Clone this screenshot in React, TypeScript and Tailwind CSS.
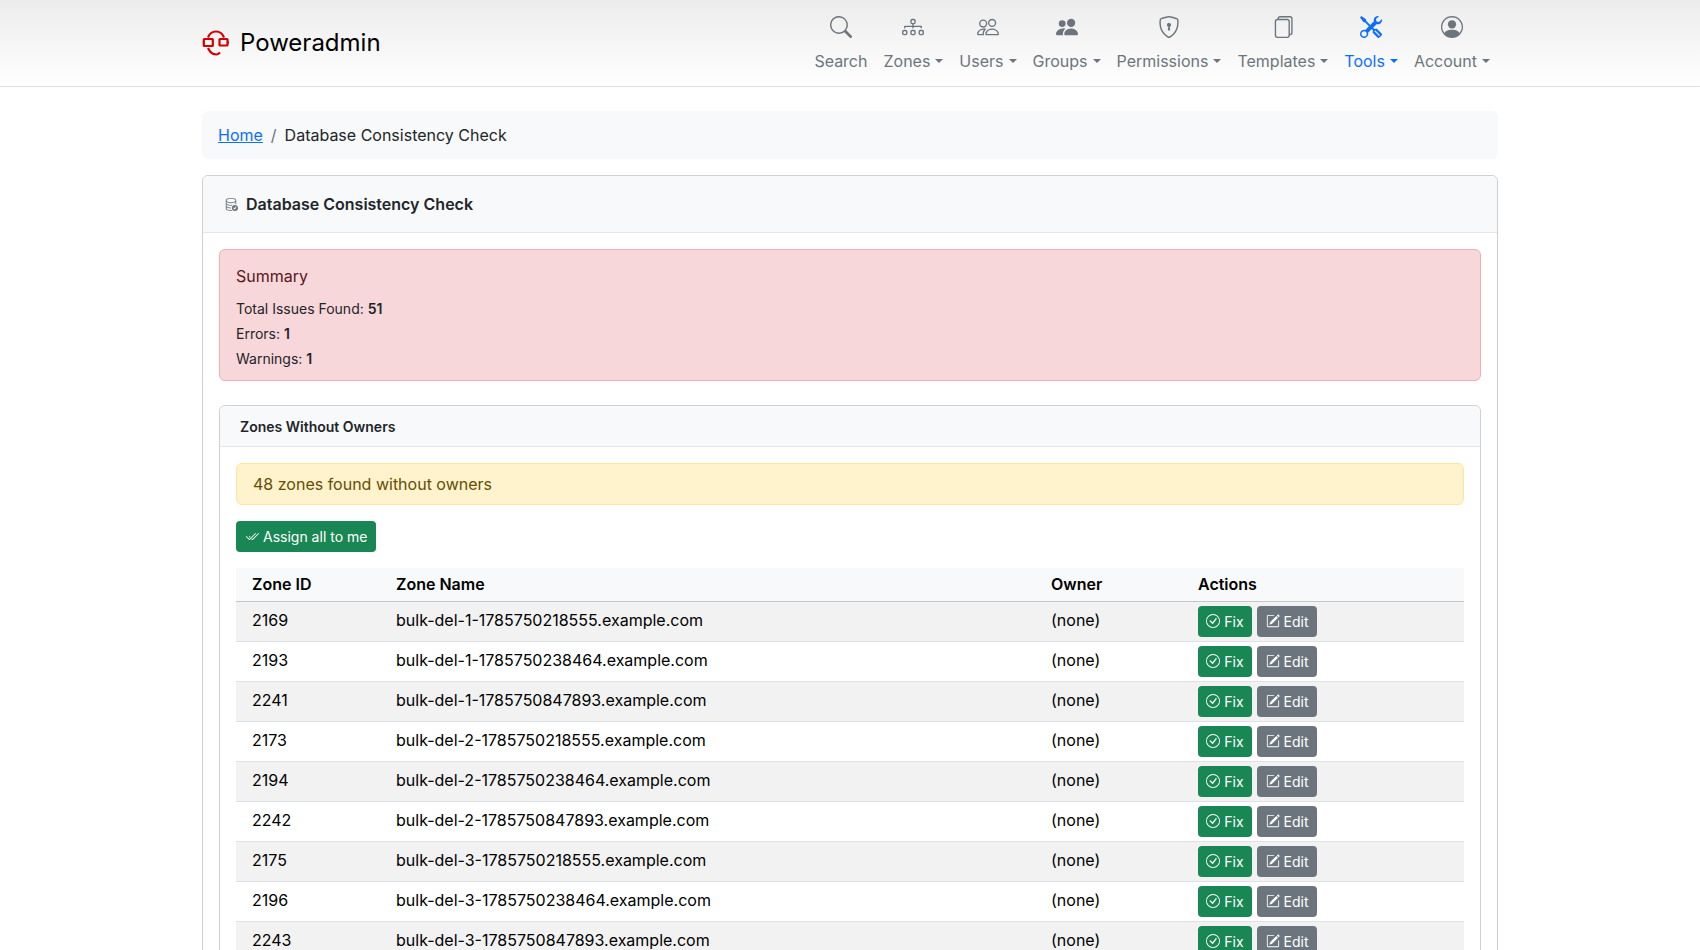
import { BsCheck2All, BsCheckCircle, BsDatabaseCheck, BsDiagram3, BsFiles, BsPencilSquare, BsPeople, BsPeopleFill, BsPersonCircle, BsSearch, BsShieldLock, BsTools } from "react-icons/bs";

const navItems = [
  { icon: BsSearch, label: "Search", caret: false },
  { icon: BsDiagram3, label: "Zones", caret: true },
  { icon: BsPeople, label: "Users", caret: true },
  { icon: BsPeopleFill, label: "Groups", caret: true },
  { icon: BsShieldLock, label: "Permissions", caret: true },
  { icon: BsFiles, label: "Templates", caret: true },
  { icon: BsTools, label: "Tools", caret: true, active: true },
  { icon: BsPersonCircle, label: "Account", caret: true },
];

const zones = [
  { id: 2169, name: "bulk-del-1-1785750218555.example.com" },
  { id: 2193, name: "bulk-del-1-1785750238464.example.com" },
  { id: 2241, name: "bulk-del-1-1785750847893.example.com" },
  { id: 2173, name: "bulk-del-2-1785750218555.example.com" },
  { id: 2194, name: "bulk-del-2-1785750238464.example.com" },
  { id: 2242, name: "bulk-del-2-1785750847893.example.com" },
  { id: 2175, name: "bulk-del-3-1785750218555.example.com" },
  { id: 2196, name: "bulk-del-3-1785750238464.example.com" },
  { id: 2243, name: "bulk-del-3-1785750847893.example.com" },
];

function Logo() {
  return (
    <svg width="28" height="28" viewBox="0 0 28 28" fill="none" stroke="#d40000" strokeWidth="2.2">
      <path d="M6 8.5 C7.5 4.5 10 2.5 14 2.5 C17.5 2.5 20.5 4.5 22 8.5" />
      <path d="M6 19 C8 23.5 10.5 25.5 14.5 25.5 C16 25.5 17 24.5 18 23.5" />
      <rect x="1.8" y="10" width="9" height="7" rx="0.5" />
      <rect x="17.5" y="10" width="8" height="6.5" rx="0.5" />
      <path d="M1.8 13.5 L0.8 13.5 M25.5 13.5 L27 13.5" />
    </svg>
  );
}

export default function App() {
  return (
    <div className="h-screen overflow-hidden bg-white font-['Inter',sans-serif] text-[16px] text-[#212529]">
      <nav className="h-[87px] border-b border-[#dee2e6] bg-gradient-to-b from-[#ececec] to-white">
        <div className="mx-auto flex h-full w-[1296px] items-center justify-between">
          <a className="flex items-center gap-[10px] text-[24px] leading-none text-black">
            <Logo />
            Poweradmin
          </a>
          <ul className="flex pr-0">
            {navItems.map((item) => {
              const Icon = item.icon;
              return (
                <li key={item.label} className={`flex flex-col items-center px-2 ${item.active ? "text-[#0d6efd]" : "text-[#6c757d]"}`}>
                  <Icon className="mb-[11px] mt-[3px] h-[22px] w-[22px]" />
                  <span className="flex items-center whitespace-nowrap leading-6">
                    {item.label}
                    {item.caret && <span className="ml-[5px] border-x-[4.8px] border-t-[4.8px] border-x-transparent border-t-current" />}
                  </span>
                </li>
              );
            })}
          </ul>
        </div>
      </nav>

      <main className="mx-auto w-[1296px] pt-6">
        <div className="mb-4 flex h-12 items-center rounded-[6px] bg-[#f8f9fa] px-4">
          <a className="text-[#0d6efd] underline">Home</a>
          <span className="px-2 text-[#6c757d]">/</span>
          <span>Database Consistency Check</span>
        </div>

        <section className="rounded-[6px] border border-[#ced0d3]">
          <header className="flex h-[57px] items-center gap-2 rounded-t-[6px] border-b border-[#e3e5e7] bg-[#f8f9fa] px-[21px] font-semibold">
            <BsDatabaseCheck className="h-[14px] w-[14px] text-[#6c757d]" />
            Database Consistency Check
          </header>
          <div className="p-4">
            <div className="mb-6 h-[132px] rounded-[6px] border border-[#f1aeb5] bg-[#f8d7da] px-4 pt-[14px] text-[#58151c]">
              <h4 className="mb-2 leading-6">Summary</h4>
              <p className="text-[14px] leading-[25px] text-[#212529]">Total Issues Found: <b className="font-semibold">51</b></p>
              <p className="text-[14px] leading-[25px] text-[#212529]">Errors: <b className="font-semibold">1</b></p>
              <p className="text-[14px] leading-[25px] text-[#212529]">Warnings: <b className="font-semibold">1</b></p>
            </div>

            <div className="rounded-[6px] border border-[#ced0d3]">
              <div className="flex h-[41px] items-center rounded-t-[6px] border-b border-[#e3e5e7] bg-[#f8f9fa] px-[20px] text-[14px] font-semibold">
                Zones Without Owners
              </div>
              <div className="p-4">
                <div className="mb-4 flex h-[42px] items-center rounded-[6px] border border-[#ffe69c] bg-[#fff3cd] px-4 text-[#664d03]">
                  48 zones found without owners
                </div>
                <button className="mb-4 flex h-[31px] items-center gap-1 rounded-[4px] bg-[#198754] px-[9px] text-[14px] text-white">
                  <BsCheck2All className="h-[14px] w-[14px]" />
                  Assign all to me
                </button>
                <table className="w-full table-fixed border-collapse text-left">
                  <thead>
                    <tr className="h-[33px] border-b border-[#c4c6c9] bg-[#f8f9fa] text-black">
                      <th className="w-[160px] px-4 font-semibold">Zone ID</th>
                      <th className="w-[655px] px-0 font-semibold">Zone Name</th>
                      <th className="w-[147px] px-0 font-semibold">Owner</th>
                      <th className="px-0 font-semibold">Actions</th>
                    </tr>
                  </thead>
                  <tbody>
                    {zones.map((zone, i) => (
                      <tr key={zone.id} className={`h-10 border-b border-[#dee2e6] text-black ${i % 2 === 0 ? "bg-[#f2f2f2]" : "bg-white"}`}>
                        <td className="px-4 pb-[3px]">{zone.id}</td>
                        <td className="pb-[3px]">{zone.name}</td>
                        <td className="pb-[3px]">(none)</td>
                        <td>
                          <div className="flex gap-[5px]">
                            <button className="flex h-[31px] w-[54px] items-center justify-center gap-1 rounded-[4px] bg-[#198754] text-[14px] text-white">
                              <BsCheckCircle className="h-[14px] w-[14px]" /> Fix
                            </button>
                            <button className="flex h-[31px] w-[60px] items-center justify-center gap-1 rounded-[4px] bg-[#6c757d] text-[14px] text-white">
                              <BsPencilSquare className="h-[14px] w-[14px]" /> Edit
                            </button>
                          </div>
                        </td>
                      </tr>
                    ))}
                  </tbody>
                </table>
              </div>
            </div>
          </div>
        </section>
      </main>
    </div>
  );
}
